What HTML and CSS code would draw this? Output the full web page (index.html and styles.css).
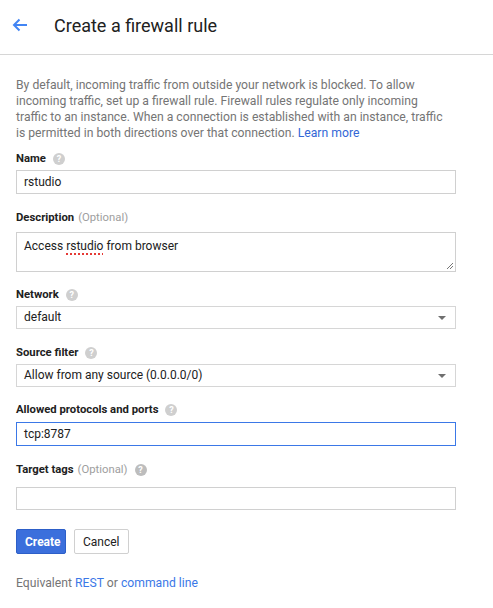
FILE: index.html
```html
<!DOCTYPE html>
<html>
<head>
<meta charset="utf-8">
<link rel="stylesheet" href="styles.css">
</head>
<body>
<header class="header">
  <svg class="back" width="16" height="14" viewBox="0 0 16 14"><path d="M15 7H2M7.5 1.5L2 7l5.5 5.5" fill="none" stroke="#4285f4" stroke-width="2"/></svg>
  <h1 class="title">Create a firewall rule</h1>
</header>
<main class="content">
  <p class="intro">By default, incoming traffic from outside your network is blocked. To allow<br>incoming traffic, set up a firewall rule. Firewall rules regulate only incoming<br>traffic to an instance. When a connection is established with an instance, traffic<br>is permitted in both directions over that connection. <a class="link" href="#">Learn more</a></p>

  <div class="field f-name">
    <div class="label">Name <span class="help">?</span></div>
    <div class="control">rstudio</div>
  </div>

  <div class="field f-desc">
    <div class="label">Description <span class="opt">(Optional)</span></div>
    <div class="control area">Access <span class="misspelled">rstudio</span> from browser
      <svg class="grip" width="8" height="8" viewBox="0 0 8 8"><path d="M7 1L1 7M7 4L4 7" stroke="#777" stroke-width="1"/></svg>
    </div>
  </div>

  <div class="field f-net">
    <div class="label">Network <span class="help">?</span></div>
    <div class="control select">default <span class="caret"></span></div>
  </div>

  <div class="field f-src">
    <div class="label">Source filter <span class="help">?</span></div>
    <div class="control select">Allow from any source (0.0.0.0/0) <span class="caret"></span></div>
  </div>

  <div class="field f-ports">
    <div class="label">Allowed protocols and ports <span class="help">?</span></div>
    <div class="control focus">tcp:8787</div>
  </div>

  <div class="field f-tags">
    <div class="label">Target tags <span class="opt">(Optional)</span> <span class="help">?</span></div>
    <div class="control"></div>
  </div>

  <div class="buttons">
    <button class="btn primary">Create</button>
    <button class="btn">Cancel</button>
  </div>

  <p class="equiv">Equivalent <a class="link" href="#">REST</a> or <a class="link" href="#">command line</a></p>
</main>
</body>
</html>
```

FILE: styles.css
```css
* { box-sizing: border-box; }
body {
  margin: 0;
  font-family: Roboto, "Liberation Sans", Arial, sans-serif;
  color: #212121;
  background: #fff;
}
.header {
  height: 55px;
  border-bottom: 1px solid #d6d6d6;
  display: flex;
  align-items: center;
  padding-left: 12px;
  padding-bottom: 4px;
}
.back { flex: none; }
.title {
  margin: 0 0 0 26px;
  font-size: 18px;
  font-weight: 400;
  color: #212121;
}
.content {
  padding: 0 16px;
  width: 493px;
}
.intro {
  margin: 22px 0 0;
  font-size: 12.2px;
  line-height: 16px;
  color: #757575;
  white-space: nowrap;
}
.link { color: #3367d6; text-decoration: none; }
.field { margin-top: 14px; }
.f-name { margin-top: 10px; }
.label {
  font-size: 11.3px;
  line-height: 16px;
  font-weight: 700;
  display: flex;
  align-items: center;
}
.opt { font-weight: 400; color: #9e9e9e; margin-left: 4px; }
.help {
  display: inline-flex;
  align-items: center;
  justify-content: center;
  width: 12px;
  height: 12px;
  border-radius: 50%;
  background: #cfcfcf;
  color: #fff;
  font-size: 9px;
  font-weight: 700;
  margin-left: 7px;
}
.control {
  position: relative;
  margin-top: 3px;
  width: 440px;
  height: 24px;
  border: 1px solid #d0d0d0;
  padding: 0 7px;
  font-size: 12px;
  line-height: 22px;
  color: #212121;
}
.f-desc { margin-top: 16px; }
.f-desc .control { margin-top: 6px; }
.area { height: 40px; padding-top: 2px; }
.misspelled { text-decoration: underline dotted #e53935; text-underline-offset: 3px; text-decoration-thickness: 1.5px; }
.grip { position: absolute; right: 1px; bottom: 1px; }
.f-net { margin-top: 15px; }
.f-net .control { margin-top: 3px; }
.select { height: 23px; line-height: 21px; border-color: #d6d6d6; }
.caret {
  position: absolute;
  right: 9px;
  top: 9px;
  width: 0; height: 0;
  border-left: 4px solid transparent;
  border-right: 4px solid transparent;
  border-top: 4px solid #6f6f6f;
}
.f-src { margin-top: 16px; }
.f-src .control { margin-top: 3px; }
.f-ports { margin-top: 15px; }
.f-ports .control { margin-top: 4px; border-color: #3b78e7; }
.f-tags { margin-top: 16px; }
.f-tags .control { margin-top: 9px; height: 23px; }
.f-tags .help { background: #bdbdbd; }
.buttons { display: flex; gap: 8px; margin-top: 19px; }
.btn {
  height: 25px;
  padding: 0 8px;
  font-family: inherit;
  font-size: 12px;
  border: 1px solid #d0d0d0;
  background: #fff;
  color: #212121;
  border-radius: 2px;
}
.primary {
  background: #3b6fdc;
  border-color: #2d5fc8;
  color: #fff;
  font-weight: 700;
  width: 50px;
}
.equiv {
  margin: 21px 0 0;
  font-size: 12.2px;
  line-height: 16px;
  color: #757575;
}
.equiv .link { color: #3b78e7; }
```
